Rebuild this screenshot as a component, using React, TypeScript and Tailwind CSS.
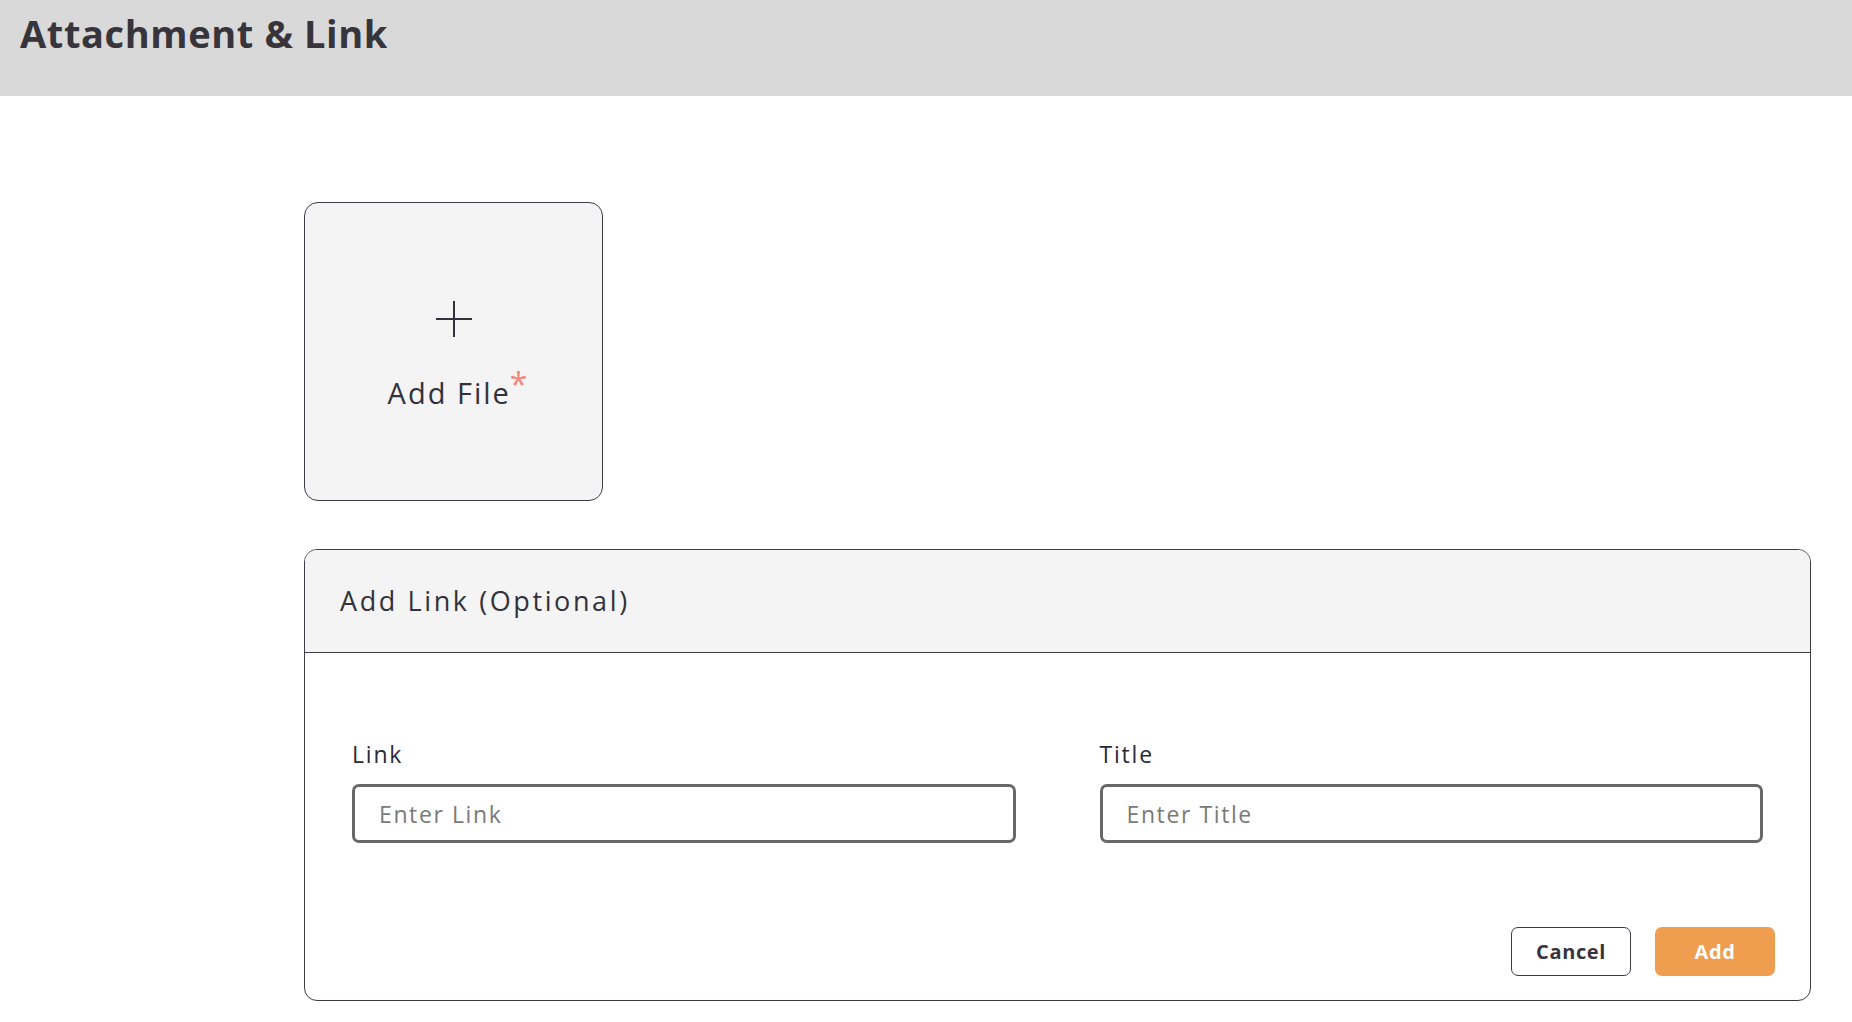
const font = { fontFamily: '"Open Sans", "Noto Sans", sans-serif' };

const PlusIcon = () => (
  <svg width="38" height="38" viewBox="0 0 38 38" fill="none" stroke="#33323a" strokeWidth="2">
    <line x1="19" y1="1" x2="19" y2="37" />
    <line x1="1" y1="19" x2="37" y2="19" />
  </svg>
);

const Field = ({ label, placeholder }: { label: string; placeholder: string }) => {
  return (
    <div className="flex flex-col">
      <label className="mb-[15px] h-[30px] text-[23px] font-medium leading-[30px] tracking-[1.8px] text-[#2b2b38]">
        {label}
      </label>
      <input
        className="h-[59px] w-full rounded-[7px] border-[3px] border-[#686868] bg-white px-[24px] text-[23px] tracking-[1.6px] text-[#333] outline-none placeholder:text-[#7a7a7a]"
        placeholder={placeholder}
      />
    </div>
  );
};

const App = () => {
  return (
    <div className="min-h-screen w-full bg-white" style={font}>
      <header className="h-[96px] w-full bg-[#d9d9d9] px-[20px] pt-[8px]">
        <h1 className="text-[38px] font-bold leading-[50px] tracking-[0.6px] text-[#37353b]">
          Attachment &amp; Link
        </h1>
      </header>

      <main className="pl-[304px] pr-[41px] pt-[106px]">
        {/* Add file */}
        <button className="flex h-[299px] w-[299px] flex-col items-center rounded-[14px] border border-[#3d3d45] bg-[#f4f4f4] pt-[97px]">
          <PlusIcon />
          <span className="mt-[36px] pl-[10px] text-[29px] leading-[36px] tracking-[2px] text-[#33323a]">
            Add File<span className="relative -top-[8px] ml-[-1px] text-[32px] text-[#f2877a]">*</span>
          </span>
        </button>

        {/* Link section */}
        <section className="mt-[48px] overflow-hidden rounded-[13px] border border-[#3d3d45]">
          <div className="flex h-[103px] items-center border-b border-[#3d3d45] bg-[#f4f4f4] px-[35px]">
            <h2 className="text-[27px] leading-[36px] tracking-[2.6px] text-[#33323a]">Add Link (Optional)</h2>
          </div>
          <div className="px-[47px] pt-[86px]">
            <div className="grid grid-cols-2 gap-x-[84px]">
              <Field label="Link" placeholder="Enter Link" />
              <Field label="Title" placeholder="Enter Title" />
            </div>
          </div>
          <div className="flex justify-end gap-[24px] pb-[24px] pr-[35px] pt-[84px]">
            <button className="h-[49px] w-[120px] rounded-[7px] border border-[#3d3d45] bg-white text-[20px] font-bold tracking-[0.6px] text-[#37353b]">
              Cancel
            </button>
            <button className="h-[49px] w-[120px] rounded-[7px] bg-[#ef9d4e] text-[20px] font-bold tracking-[0.6px] text-white">
              Add
            </button>
          </div>
        </section>
      </main>
    </div>
  );
};

export default App;
